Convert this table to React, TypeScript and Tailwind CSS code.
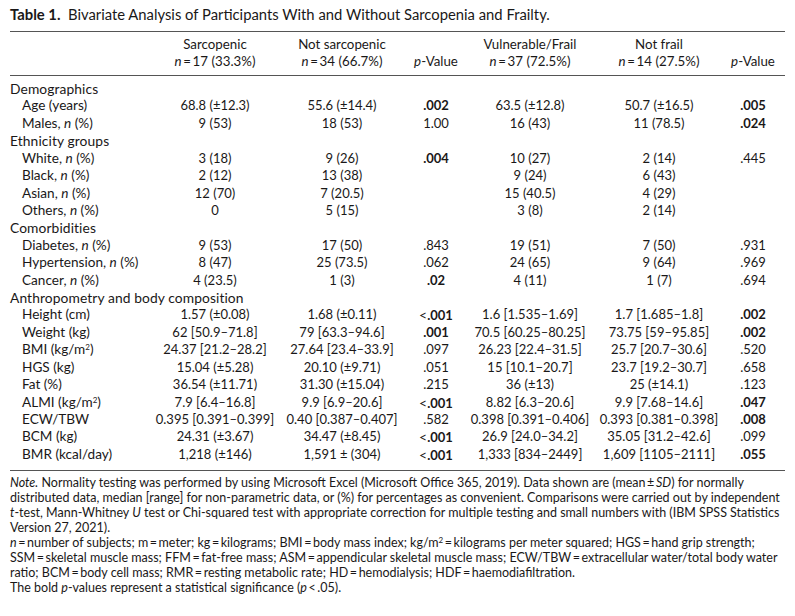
import type { ReactNode } from "react";

type Row = {
  label: ReactNode;
  cat?: boolean;
  cells?: ReactNode[];
};

const pm = "\u00b1";
const nPct = (name: string) => (
  <>
    {name}, <i>n</i> (%)
  </>
);
const lt = (v: string) => (
  <>
    <span className="text-[14px]">&lt;</span>
    <b>{v}</b>
  </>
);

const rows: Row[] = [
  { label: "Demographics", cat: true },
  { label: "Age (years)", cells: [`68.8 (${pm}12.3)`, `55.6 (${pm}14.4)`, <b>.002</b>, `63.5 (${pm}12.8)`, `50.7 (${pm}16.5)`, <b>.005</b>] },
  { label: nPct("Males"), cells: ["9 (53)", "18 (53)", "1.00", "16 (43)", "11 (78.5)", <b>.024</b>] },
  { label: "Ethnicity groups", cat: true },
  { label: nPct("White"), cells: ["3 (18)", "9 (26)", <b>.004</b>, "10 (27)", "2 (14)", ".445"] },
  { label: nPct("Black"), cells: ["2 (12)", "13 (38)", "", "9 (24)", "6 (43)", ""] },
  { label: nPct("Asian"), cells: ["12 (70)", "7 (20.5)", "", "15 (40.5)", "4 (29)", ""] },
  { label: nPct("Others"), cells: ["0", "5 (15)", "", "3 (8)", "2 (14)", ""] },
  { label: "Comorbidities", cat: true },
  { label: nPct("Diabetes"), cells: ["9 (53)", "17 (50)", ".843", "19 (51)", "7 (50)", ".931"] },
  { label: nPct("Hypertension"), cells: ["8 (47)", "25 (73.5)", ".062", "24 (65)", "9 (64)", ".969"] },
  { label: nPct("Cancer"), cells: ["4 (23.5)", "1 (3)", <b>.02</b>, "4 (11)", "1 (7)", ".694"] },
  { label: "Anthropometry and body composition", cat: true },
  { label: "Height (cm)", cells: [`1.57 (${pm}0.08)`, `1.68 (${pm}0.11)`, lt(".001"), "1.6 [1.535–1.69]", "1.7 [1.685–1.8]", <b>.002</b>] },
  { label: "Weight (kg)", cells: ["62 [50.9–71.8]", "79 [63.3–94.6]", <b>.001</b>, "70.5 [60.25–80.25]", "73.75 [59–95.85]", <b>.002</b>] },
  { label: <>BMI (kg/m<sup className="text-[8px]">2</sup>)</>, cells: ["24.37 [21.2–28.2]", "27.64 [23.4–33.9]", ".097", "26.23 [22.4–31.5]", "25.7 [20.7–30.6]", ".520"] },
  { label: "HGS (kg)", cells: [`15.04 (${pm}5.28)`, `20.10 (${pm}9.71)`, ".051", "15 [10.1−20.7]", "23.7 [19.2–30.7]", ".658"] },
  { label: "Fat (%)", cells: [`36.54 (${pm}11.71)`, `31.30 (${pm}15.04)`, ".215", `36 (${pm}13)`, `25 (${pm}14.1)`, ".123"] },
  { label: <>ALMI (kg/m<sup className="text-[8px]">2</sup>)</>, cells: ["7.9 [6.4–16.8]", "9.9 [6.9–20.6]", lt(".001"), "8.82 [6.3–20.6]", "9.9 [7.68–14.6]", <b>.047</b>] },
  { label: "ECW/TBW", cells: ["0.395 [0.391–0.399]", "0.40 [0.387–0.407]", ".582", "0.398 [0.391–0.406]", "0.393 [0.381–0.398]", <b>.008</b>] },
  { label: "BCM (kg)", cells: [`24.31 (${pm}3.67)`, `34.47 (${pm}8.45)`, lt(".001"), "26.9 [24.0–34.2]", "35.05 [31.2–42.6]", ".099"] },
  { label: "BMR (kcal/day)", cells: [`1,218 (${pm}146)`, `1,591 ${pm} (304)`, lt(".001"), "1,333 [834–2449]", "1,609 [1105–2111]", <b>.055</b>] },
];

const grid = "grid grid-cols-[145px_120px_134px_54px_134px_124px_64px]";
const eq = "\u2009=\u2009";

export default function App() {
  return (
    <div className="w-[795px] h-[616px] bg-white px-[10px] pt-[5px] font-['Lato',sans-serif] text-[#1a1818] overflow-hidden">
      <h1 className="text-[14.8px] leading-[18px] whitespace-nowrap">
        <b>Table 1.</b>&nbsp; Bivariate Analysis of Participants With and Without Sarcopenia and Frailty.
      </h1>

      <div className="mt-[8px] border-t border-[#555]">
        <div className={`${grid} pt-[4px] pb-[5px] text-[13.3px] leading-[17px] text-center border-b border-[#555]`}>
          <div />
          <div>
            Sarcopenic
            <br />
            <i>n</i>{eq}17 (33.3%)
          </div>
          <div>
            Not sarcopenic
            <br />
            <i>n</i>{eq}34 (66.7%)
          </div>
          <div className="flex items-end justify-center">
            <span>
              <i>p</i>-Value
            </span>
          </div>
          <div>
            Vulnerable/Frail
            <br />
            <i>n</i>{eq}37 (72.5%)
          </div>
          <div>
            Not frail
            <br />
            <i>n</i>{eq}14 (27.5%)
          </div>
          <div className="flex items-end justify-center">
            <span>
              <i>p</i>-Value
            </span>
          </div>
        </div>

        <div className="pt-[4px] pb-[7px] border-b border-[#555] text-[13px] leading-[17.43px]">
          {rows.map((r, i) =>
            r.cat ? (
              <div key={i} className="h-[17.43px] whitespace-nowrap text-[13.8px] tracking-[0.1px]">
                {r.label}
              </div>
            ) : (
              <div key={i} className={`${grid} h-[17.43px] whitespace-nowrap`}>
                <div className="pl-[12px] text-[13.6px]">{r.label}</div>
                {r.cells!.map((c, j) => (
                  <div key={j} className="text-center">
                    {c}
                  </div>
                ))}
              </div>
            )
          )}
        </div>
      </div>

      <div className="mt-[4px] text-[12.5px] leading-[15px] whitespace-nowrap">
        <div>
          <i>Note.</i> Normality testing was performed by using Microsoft Excel (Microsoft Office 365, 2019). Data shown are (mean{"\u2009"}
          {pm}
          {"\u2009"}
          <i>SD</i>) for normally
        </div>
        <div>
          distributed data, median [range] for non-parametric data, or (%) for percentages as convenient. Comparisons were carried out by independent
        </div>
        <div>
          <i>t</i>-test, Mann-Whitney <i>U</i> test or Chi-squared test with appropriate correction for multiple testing and small numbers with (IBM SPSS Statistics
        </div>
        <div>Version 27, 2021).</div>
        <div>
          <i>n</i>
          {eq}number of subjects; m{eq}meter; kg{eq}kilograms; BMI{eq}body mass index; kg/m<sup className="text-[8px]">2</sup>
          {eq}kilograms per meter squared; HGS{eq}hand grip strength;
        </div>
        <div>
          SSM{eq}skeletal muscle mass; FFM{eq}fat-free mass; ASM{eq}appendicular skeletal muscle mass; ECW/TBW{eq}extracellular water/total body water
        </div>
        <div>
          ratio; BCM{eq}body cell mass; RMR{eq}resting metabolic rate; HD{eq}hemodialysis; HDF{eq}haemodiafiltration.
        </div>
        <div>
          The bold <i>p</i>-values represent a statistical significance (<i>p</i>
          {"\u2009"}&lt;{"\u2009"}.05).
        </div>
      </div>
    </div>
  );
}
